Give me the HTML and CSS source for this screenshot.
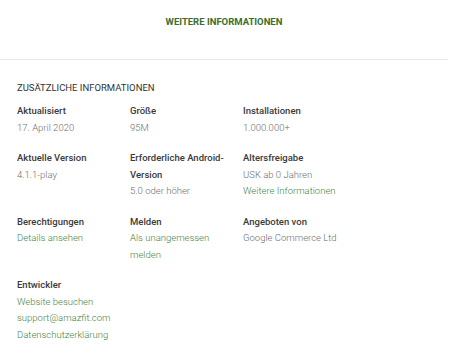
FILE: index.html
```html
<!DOCTYPE html>
<html lang="de">
<head>
    <meta charset="UTF-8">
    <meta name="viewport" content="width=device-width, initial-scale=1.0">
    <title>Zusätzliche Informationen</title>
    <link rel="stylesheet" href="styles.css">
</head>
<body>
    <div class="more-bar">
        <a href="#" class="more-link">WEITERE INFORMATIONEN</a>
    </div>

    <div class="details">
        <h2>ZUSÄTZLICHE INFORMATIONEN</h2>
        <div class="details-grid">
            <div class="item">
                <div class="label">Aktualisiert</div>
                <div class="value">17. April 2020</div>
            </div>
            <div class="item">
                <div class="label">Größe</div>
                <div class="value">95M</div>
            </div>
            <div class="item">
                <div class="label">Installationen</div>
                <div class="value">1.000.000+</div>
            </div>

            <div class="item">
                <div class="label">Aktuelle Version</div>
                <div class="value">4.1.1-play</div>
            </div>
            <div class="item">
                <div class="label">Erforderliche Android-Version</div>
                <div class="value">5.0 oder höher</div>
            </div>
            <div class="item">
                <div class="label">Altersfreigabe</div>
                <div class="value">USK ab 0 Jahren</div>
                <a href="#" class="value link">Weitere Informationen</a>
            </div>

            <div class="item">
                <div class="label">Berechtigungen</div>
                <a href="#" class="value link">Details ansehen</a>
            </div>
            <div class="item">
                <div class="label">Melden</div>
                <a href="#" class="value link">Als unangemessen melden</a>
            </div>
            <div class="item">
                <div class="label">Angeboten von</div>
                <div class="value">Google Commerce Ltd</div>
            </div>

            <div class="item">
                <div class="label">Entwickler</div>
                <a href="#" class="value link">Website besuchen</a>
                <a href="#" class="value link">support@amazfit.com</a>
                <a href="#" class="value link">Datenschutzerklärung</a>
            </div>
        </div>
    </div>
</body>
</html>
```

FILE: styles.css
```css
body {
    font-family: Roboto, "Liberation Sans", Arial, sans-serif;
    margin: 0;
    background-color: #fff;
    font-size: 9.5px;
    line-height: 16.5px;
    color: #333;
}

.more-bar {
    width: 448px;
    padding: 14px 0 28px;
    text-align: center;
    border-bottom: 1px solid #e8e8e8;
}

.more-link {
    font-size: 9.5px;
    font-weight: 700;
    color: #3b6e2c;
    text-decoration: none;
}

.details {
    padding: 20px 17px 0;
}

.details h2 {
    font-size: 9.5px;
    font-weight: 400;
    margin: 0 0 7px;
    color: #333;
}

.details-grid {
    display: grid;
    grid-template-columns: repeat(3, 113px);
    row-gap: 14px;
}

.item {
    padding-right: 15px;
}

.label {
    font-weight: 500;
    color: #3a3a3a;
}

.value {
    display: block;
    font-weight: 300;
    color: #6e6e6e;
}

.link {
    color: #4a7f3c;
    text-decoration: none;
}
```
